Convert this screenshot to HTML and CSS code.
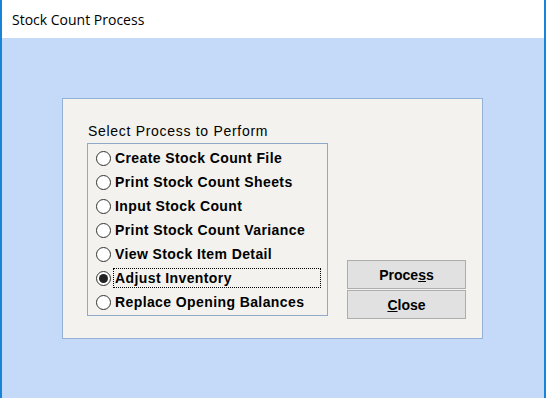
FILE: index.html
```html
<!DOCTYPE html>
<html lang="en">
<head>
    <meta charset="UTF-8">
    <title>Stock Count Process</title>
    <link rel="stylesheet" href="styles.css">
</head>
<body>
    <div class="window">
        <div class="title-bar">Stock Count Process</div>
        <div class="client">
            <div class="panel">
                <div class="process-group">
                    <div class="group-label">Select Process to Perform</div>
                    <div class="group-box">
                        <label class="option"><span class="radio"></span><span class="option-text">Create Stock Count File</span></label>
                        <label class="option"><span class="radio"></span><span class="option-text">Print Stock Count Sheets</span></label>
                        <label class="option"><span class="radio"></span><span class="option-text">Input Stock Count</span></label>
                        <label class="option"><span class="radio"></span><span class="option-text">Print Stock Count Variance</span></label>
                        <label class="option"><span class="radio"></span><span class="option-text">View Stock Item Detail</span></label>
                        <label class="option"><span class="radio checked"></span><span class="option-text focused">Adjust Inventory</span></label>
                        <label class="option"><span class="radio"></span><span class="option-text">Replace Opening Balances</span></label>
                    </div>
                </div>
                <div class="actions">
                    <button class="btn">Proce<u>s</u>s</button>
                    <button class="btn"><u>C</u>lose</button>
                </div>
            </div>
        </div>
    </div>
</body>
</html>
```

FILE: styles.css
```css
body {
    margin: 0;
    padding: 0;
    font-family: 'Liberation Sans', Arial, sans-serif;
    color: #000;
}
.window {
    width: 546px;
    height: 398px;
    box-sizing: border-box;
    border-left: 2px solid #1883d7;
    border-right: 2px solid #1883d7;
    display: flex;
    flex-direction: column;
}
.title-bar {
    height: 38px;
    box-sizing: border-box;
    background-color: #ffffff;
    font-family: 'Open Sans', 'Noto Sans', sans-serif;
    font-size: 14px;
    line-height: 36px;
    padding: 2px 0 0 10px;
    flex-shrink: 0;
}
.client {
    flex-grow: 1;
    background-color: #c4daf8;
    padding: 60px 0 0 60px;
}
.panel {
    width: 421px;
    height: 241px;
    box-sizing: border-box;
    background-color: #f3f2ee;
    border: 1px solid #94b2d6;
    padding: 24px 0 0 24px;
    display: flex;
    gap: 19px;
}
.group-label {
    font-size: 14px;
    letter-spacing: 0.7px;
    line-height: 16px;
    margin-left: 1px;
    margin-bottom: 4px;
    white-space: nowrap;
}
.group-box {
    width: 241px;
    height: 173px;
    box-sizing: border-box;
    border: 1px solid #8fa9c9;
    padding: 2px 0 0 8px;
}
.option {
    display: flex;
    align-items: center;
    height: 24px;
    font-size: 14px;
    letter-spacing: 0.4px;
    font-weight: bold;
    white-space: nowrap;
}
.radio {
    width: 15px;
    height: 15px;
    box-sizing: border-box;
    border: 1px solid #333;
    border-radius: 50%;
    background-color: #fff;
    margin-right: 2px;
    flex-shrink: 0;
    display: flex;
    align-items: center;
    justify-content: center;
}
.radio.checked::after {
    content: "";
    width: 9px;
    height: 9px;
    border-radius: 50%;
    background-color: #222;
}
.option-text {
    padding: 1px 0 1px 1px;
    border: 1px solid transparent;
}
.option-text.focused {
    border: 1px dotted #000;
    width: 205px;
}
.actions {
    align-self: flex-end;
    margin-bottom: 19px;
    display: flex;
    flex-direction: column;
    gap: 1px;
}
.btn {
    width: 119px;
    height: 29px;
    background-color: #e1e1e1;
    border: 1px solid #adadad;
    font-family: 'Liberation Sans', Arial, sans-serif;
    font-size: 14px;
    font-weight: bold;
    color: #000;
    padding: 0;
}
```
